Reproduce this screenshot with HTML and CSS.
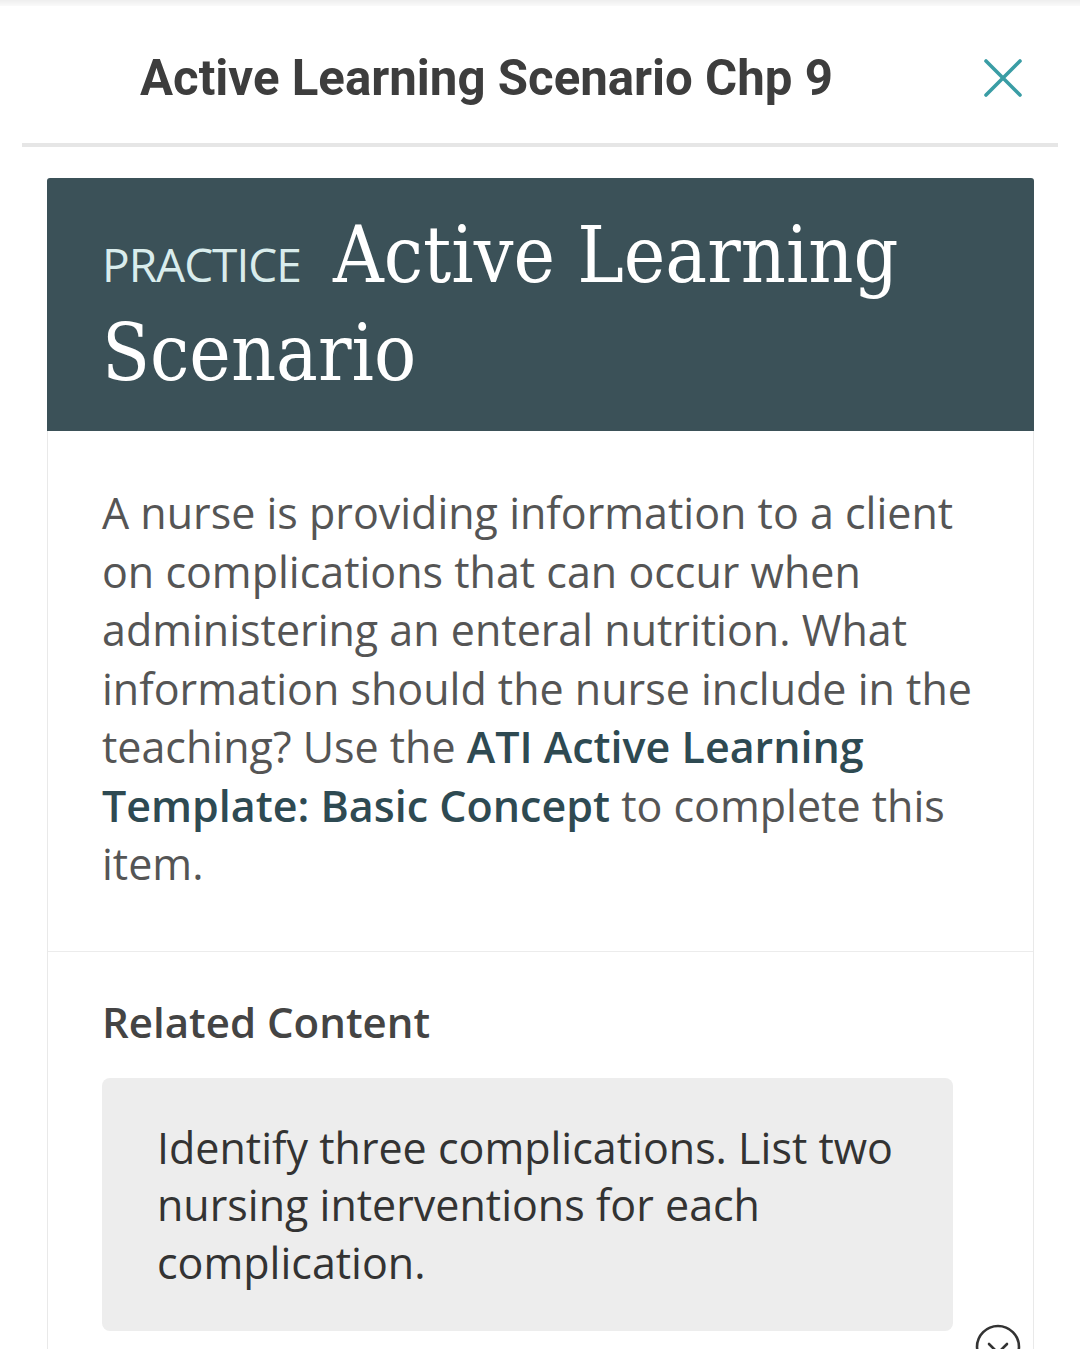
FILE: index.html
```html
<!DOCTYPE html>
<html lang="en">
<head>
    <meta charset="UTF-8">
    <meta name="viewport" content="width=device-width, initial-scale=1.0">
    <title>Active Learning Scenario Chp 9</title>
    <link rel="stylesheet" href="styles.css">
</head>
<body>
    <div class="top-strip"></div>
    <header class="modal-head">
        <h1>Active Learning Scenario Chp 9</h1>
        <button class="close-btn" aria-label="Close">
            <svg width="40" height="40" viewBox="0 0 40 40">
                <path d="M3 3 L37 37 M37 3 L3 37" stroke="#3a9da5" stroke-width="3.6" stroke-linecap="round" fill="none"/>
            </svg>
        </button>
    </header>
    <div class="divider"></div>

    <div class="card">
        <div class="card-banner">
            <h2><span class="kind">PRACTICE</span> Active Learning Scenario</h2>
        </div>
        <div class="card-body">
            <p>A nurse is providing information to a client on complications that can occur when administering an enteral nutrition. What information should the nurse include in the teaching? Use the <a href="#">ATI Active Learning Template: Basic Concept</a> to complete this item.</p>
        </div>
        <div class="related">
            <h3>Related Content</h3>
            <div class="related-box">
                Identify three complications. List two nursing interventions for each complication.
            </div>
        </div>
        <button class="scroll-btn" aria-label="More">
            <svg width="46" height="46" viewBox="0 0 46 46">
                <circle cx="23" cy="23" r="21" stroke="#333" stroke-width="2.6" fill="#fff"/>
                <path d="M14 20 L23 29 L32 20" stroke="#333" stroke-width="2.6" fill="none" stroke-linecap="round"/>
            </svg>
        </button>
    </div>
</body>
</html>
```

FILE: styles.css
```css
body {
    margin: 0;
    background-color: #fff;
    font-family: "Open Sans", sans-serif;
    color: #555;
    overflow: hidden;
}
.top-strip {
    height: 6px;
    background: linear-gradient(#eeeeee, #fafafa);
}
.modal-head {
    display: flex;
    align-items: center;
    justify-content: space-between;
    padding: 41px 57px 34px 140px;
}
.modal-head h1 {
    margin: 0;
    font-family: Roboto, sans-serif;
    font-weight: 700;
    font-size: 49.2px;
    line-height: 62px;
    color: #3d3d3d;
}
.close-btn {
    border: none;
    background: none;
    padding: 0;
    width: 40px;
    height: 40px;
    cursor: pointer;
}
.divider {
    margin: 0 22px;
    height: 4px;
    background-color: #e6e6e6;
}
.card {
    position: relative;
    margin: 31px 46px 0 47px;
    border: 1px solid #e9e9e9;
    border-radius: 4px 4px 0 0;
    height: 1200px;
}
.card-banner {
    background-color: #3b5158;
    border-radius: 3px 3px 0 0;
    padding: 28px 56px 29px 55px;
    margin: -1px -1px 0 -1px;
}
.card-banner h2 {
    margin: 0;
    font-family: "DejaVu Serif Condensed", "DejaVu Serif", serif;
    font-stretch: condensed;
    font-weight: 400;
    font-size: 78px;
    line-height: 98px;
    color: #fff;
}
.kind {
    font-family: "Open Sans", sans-serif;
    font-stretch: normal;
    font-size: 46px;
    line-height: 1;
    color: #d9ecec;
    margin-right: 10px;
    letter-spacing: -1px;
}
.card-body {
    padding: 53px 41px 57px 54px;
    border-bottom: 1px solid #ececec;
}
.card-body p {
    margin: 0;
    font-size: 43px;
    line-height: 58.5px;
    color: #555;
}
.card-body a {
    color: #2e4a52;
    font-weight: 600;
    text-decoration: none;
}
.related {
    padding: 41px 80px 0 54px;
}
.related h3 {
    margin: 0 0 27px;
    font-size: 42px;
    font-weight: 600;
    line-height: 58px;
    color: #444;
}
.related-box {
    background-color: #ededed;
    border-radius: 8px;
    padding: 41px 40px 40px 55px;
    font-size: 43px;
    line-height: 57.5px;
    color: #333;
}
.scroll-btn {
    position: absolute;
    right: 12px;
    top: 1145px;
    border: none;
    background: none;
    padding: 0;
}
```
